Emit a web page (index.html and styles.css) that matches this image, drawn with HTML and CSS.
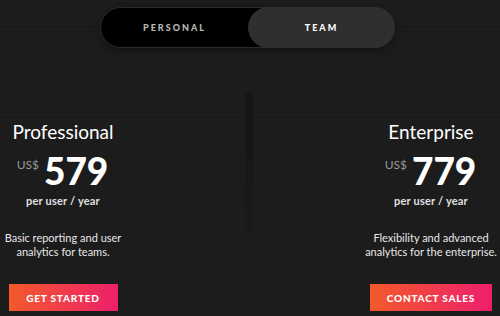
FILE: index.html
```html
<!DOCTYPE html>
<html>
<head>
<meta charset="utf-8">
<link rel="stylesheet" href="styles.css">
</head>
<body>
<div class="page">
  <div class="rule rule-top"></div>
  <div class="rule rule-mid"></div>
  <div class="shadow-bar"></div>
  <div class="toggle-row">
    <div class="toggle">
      <div class="opt">PERSONAL</div>
      <div class="opt active">TEAM</div>
    </div>
  </div>
  <div class="plans">
    <div class="plan">
      <div class="name">Professional</div>
      <div class="price"><span class="cur">US$</span><span class="amt">579</span></div>
      <div class="per">per user / year</div>
      <div class="desc">Basic reporting and user<br>analytics for teams.</div>
      <div class="btn">GET STARTED</div>
    </div>
    <div class="spacer"></div>
    <div class="plan">
      <div class="name">Enterprise</div>
      <div class="price"><span class="cur">US$</span><span class="amt">779</span></div>
      <div class="per">per user / year</div>
      <div class="desc">Flexibility and advanced<br>analytics for the enterprise.</div>
      <div class="btn">CONTACT SALES</div>
    </div>
  </div>
</div>
</body>
</html>
```
FILE: styles.css
```css
html, body {
  margin: 0;
  padding: 0;
  background: #1c1c1c;
}
.page {
  position: relative;
  width: 500px;
  height: 316px;
  overflow: hidden;
  font-family: "Lato", "Liberation Sans", sans-serif;
  color: #fff;
}
.rule {
  position: absolute;
  left: 0;
  right: 0;
  height: 1px;
  background: #161616;
}
.rule-top { top: 26px; }
.rule-mid { top: 117px; }
.shadow-bar {
  position: absolute;
  left: 245px;
  top: 93px;
  width: 8px;
  height: 175px;
  background: linear-gradient(#151515, #181818 50%, rgba(26,26,26,0));
  border-radius: 2px 5px 0 0;
}
.toggle-row {
  position: relative;
  display: flex;
  justify-content: center;
  padding-top: 7px;
}
.toggle {
  display: flex;
  width: 295px;
  height: 41px;
  margin-left: -5px;
  background: #000;
  border: 1px solid #2c2c2c;
  border-radius: 21px;
  box-sizing: border-box;
  box-shadow: 0 2px 6px rgba(0,0,0,0.4);
}
.opt {
  flex: 1;
  display: flex;
  align-items: center;
  justify-content: center;
  font-size: 9px;
  font-weight: 900;
  letter-spacing: 2px;
  color: #b8b8b8;
  border-radius: 21px;
}
.opt.active {
  background: #2f2f2f;
  color: #fff;
  margin: -1px -1px -1px 0;
}
.plans {
  position: relative;
  display: grid;
  grid-template-columns: 126px 1fr 126px;
  padding-right: 6px;
  margin-top: 73px;
}
.plan {
  display: flex;
  flex-direction: column;
  align-items: center;
  text-align: center;
}
.name {
  font-size: 19px;
  line-height: 22px;
  font-weight: 400;
  color: #fff;
}
.price {
  display: flex;
  align-items: flex-start;
  margin-top: 11px;
  margin-left: -1px;
}
.cur {
  font-size: 12px;
  color: #9a9a9a;
  margin-top: 3px;
  margin-right: 5px;
}
.amt {
  font-size: 37px;
  line-height: 34px;
  font-weight: 900;
  color: #fff;
}
.per {
  font-size: 11px;
  font-weight: 700;
  letter-spacing: 0.2px;
  color: #e0e0e0;
  margin-top: 6px;
}
.desc {
  font-size: 11px;
  line-height: 14px;
  color: #e8e8e8;
  margin-top: 24px;
  white-space: nowrap;
}
.btn {
  margin-top: 25px;
  height: 27px;
  display: flex;
  align-items: center;
  justify-content: center;
  background: linear-gradient(90deg, #f25a2a, #ee1f6c);
  color: #fff;
  font-size: 10px;
  font-weight: 900;
  letter-spacing: 0.8px;
  white-space: nowrap;
  box-sizing: border-box;
}
.plan:first-child .btn { width: 109px; }
.plan:last-child .btn { width: 122px; }
```
